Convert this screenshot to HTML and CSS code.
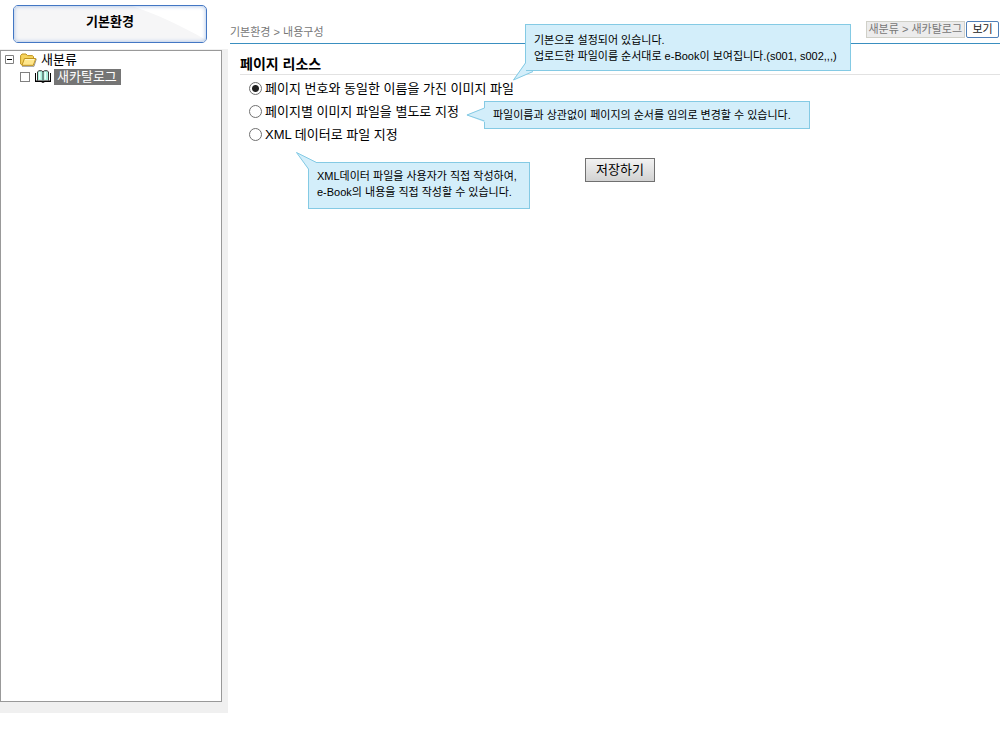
FILE: index.html
```html
<!DOCTYPE html>
<html lang="ko">
<head>
<meta charset="utf-8">
<title>기본환경 - 내용구성</title>
<link rel="stylesheet" href="styles.css">
</head>
<body>
<div class="layout">
  <aside class="sidebar">
    <div class="sidebar-head">
      <button class="env-button" type="button">
        <svg class="env-sheen" viewBox="0 0 192 36" preserveAspectRatio="none" aria-hidden="true"><path d="M0 0H118C142 8 168 20 192 34V36H0Z" fill="#f6f6f7"/></svg>
        <span class="env-label">기본환경</span>
      </button>
    </div>
    <div class="tree-frame">
      <ul class="tree">
        <li class="tree-item">
          <svg class="expander" width="9" height="9" viewBox="0 0 9 9" aria-hidden="true"><path d="M.5 .5H8.5V8.5H.5Z" fill="#fff" stroke="#808080"/><path d="M2 4.5H7" stroke="#000"/></svg>
          <svg class="folder" width="17" height="14" viewBox="0 0 17 14" aria-hidden="true">
            <path d="M2 13.3H14L16.3 6" fill="none" stroke="#999"/>
            <path d="M.6 11V2.6L2 1H6L7.5 2.6H12.5L13.5 3.7V12H2Z" fill="#f6d35c" stroke="#c09420"/>
            <path d="M2 12.3L4.4 5.5H15.8L13.3 12.3Z" fill="#ffe78c" stroke="#c09420"/>
            <path d="M5 6.6H14" stroke="#fff8cf"/>
          </svg>
          <span class="tree-label">새분류</span>
        </li>
        <li class="tree-item tree-child">
          <input class="tree-check" type="checkbox" id="catalog">
          <svg class="book" width="16" height="13" viewBox="0 0 16 13" aria-hidden="true">
            <path d="M2.5 2L4 1H6.5L8 2.2L9.5 1H12L13.5 2V10H9.5L8 11L6.5 10H2.5Z" fill="#a9f0dc"/>
            <path d="M4 2H5.5V9.5H4ZM9.5 2H11V9.5H9.5Z" fill="#effffa"/>
            <path d="M2.5 10.5V1.8L4 .7H6.5L8 1.8L9.5 .7H12L13.5 1.8V10.5M8 2V11" fill="none" stroke="#222" stroke-width=".9"/>
            <path d="M.5 3V12M15.5 3V12" stroke="#000"/>
            <path d="M0 11.3H6.5L8 12.1L9.5 11.3H16" stroke="#000" stroke-width="1.5" fill="none"/>
          </svg>
          <label class="tree-label selected" for="catalog">새카탈로그</label>
        </li>
      </ul>
    </div>
  </aside>

  <main class="main">
    <header class="topbar">
      <div class="crumb">기본환경 &gt; 내용구성</div>
      <div class="top-actions">
        <span class="path-box">새분류 &gt; 새카탈로그</span>
        <button class="view-button" type="button">보기</button>
      </div>
    </header>

    <form class="resource">
      <h1 class="section-title">페이지 리소스</h1>
      <div class="option">
        <input class="radio" type="radio" name="resource" id="r1" checked>
        <label for="r1">페이지 번호와 동일한 이름을 가진 이미지 파일</label>
        <div class="callout callout-default">기본으로 설정되어 있습니다.<br>업로드한 파일이름 순서대로 e-Book이 보여집니다.(s001, s002,,,)
          <svg class="tail" width="21" height="18" viewBox="0 0 21 18" aria-hidden="true"><path d="M12 0L0 17L20 9V8H13V0Z" fill="#d3eefa"/><path d="M12.5 0L.5 17L20 8.5" fill="none" stroke="#84cae4"/></svg>
        </div>
      </div>
      <div class="option">
        <input class="radio" type="radio" name="resource" id="r2">
        <label for="r2">페이지별 이미지 파일을 별도로 지정</label>
        <div class="callout callout-order">파일이름과 상관없이 페이지의 순서를 임의로 변경할 수 있습니다.
          <svg class="tail" width="20" height="16" viewBox="0 0 20 16" aria-hidden="true"><path d="M20 1L18 1L0 8L18 15H20Z" fill="#d3eefa"/><path d="M18.5 1L1 8L18.5 14" fill="none" stroke="#84cae4"/></svg>
        </div>
      </div>
      <div class="option">
        <input class="radio" type="radio" name="resource" id="r3">
        <label for="r3">XML 데이터로 파일 지정</label>
        <div class="callout callout-xml">XML데이터 파일을 사용자가 직접 작성하여,<br>e-Book의 내용을 직접 작성할 수 있습니다.
          <svg class="tail" width="22" height="18" viewBox="0 0 22 18" aria-hidden="true"><path d="M0 0L20 10V11H13V17H12Z" fill="#d3eefa"/><path d="M20.5 10.5L.5 .5L12.5 17" fill="none" stroke="#84cae4"/></svg>
        </div>
      </div>
      <div class="submit-row">
        <button class="save-button" type="button">저장하기</button>
      </div>
    </form>
  </main>
</div>
</body>
</html>
```
FILE: styles.css
```css
* {
  box-sizing: border-box;
}

body {
  margin: 0;
  background: #fff;
  color: #000;
  font: 13px/16px "Liberation Sans", "Noto Sans CJK KR", sans-serif;
}

button {
  font-family: inherit;
  color: inherit;
}

.layout {
  display: grid;
  grid-template-columns: 228px minmax(0, 1fr);
  height: 100vh;
}

.sidebar {
  display: flex;
  flex-direction: column;
  padding-bottom: 16px;
}

.sidebar-head {
  padding: 5px 21px 6px 13px;
}

.env-button {
  position: relative;
  display: block;
  width: 100%;
  height: 38px;
  padding: 0 0 7px;
  overflow: hidden;
  border: 1px solid #4377c4;
  border-radius: 5px;
  background: #fff;
  font-size: 13px;
  font-weight: bold;
}

.env-button::after {
  content: "";
  position: absolute;
  inset: 0;
  border-radius: 4px;
  box-shadow: inset 0 0 4px #9db9e2;
}

.env-sheen {
  position: absolute;
  inset: 0;
  width: 100%;
  height: 100%;
}

.env-label {
  position: relative;
}

.tree-frame {
  flex: 1;
  display: flex;
  padding: 1px 6px 11px 0;
  background: #f0f0f0;
}

.tree {
  flex: 1;
  margin: 0;
  padding: 0 4px;
  border: 1px solid #999;
  background: #fff;
  list-style: none;
}

.tree-item {
  display: flex;
  align-items: center;
  height: 17px;
}

.folder {
  margin: 0 4px 0 6px;
}

.tree-child {
  padding-left: 15px;
}

.tree-check {
  appearance: none;
  width: 10px;
  height: 10px;
  margin: 0 5px 0 0;
  border: 1px solid #808080;
  background: #fff;
}

.book {
  margin-right: 3px;
}

.selected {
  padding: 0 4px 0 3px;
  background: #757575;
  color: #fff;
}

.main {
  padding-left: 2px;
}

.topbar {
  display: flex;
  justify-content: space-between;
  height: 44px;
  padding-top: 20px;
  border-bottom: 1px solid #3a8fc0;
  font-size: 11px;
  color: #777;
}

.crumb {
  padding-top: 4px;
}

.top-actions {
  display: flex;
  align-items: flex-start;
  gap: 1px;
  padding: 1px 1px 0 0;
}

.path-box {
  height: 17px;
  padding: 0 2px;
  border: 1px solid #d0d0c8;
  background: #ececec;
  line-height: 14px;
}

.view-button {
  width: 33px;
  height: 17px;
  padding: 0;
  border: 1px solid #4f7fb8;
  border-radius: 2px;
  background: #fff;
  color: #222;
  font-size: 11px;
  line-height: 15px;
}

.resource {
  padding: 12px 0 0 10px;
}

.section-title {
  margin: 0 0 2px;
  padding-bottom: 2px;
  border-bottom: 1px solid #e2e2e2;
  font-size: 14px;
  line-height: 16px;
}

.option {
  position: relative;
  display: flex;
  align-items: center;
  gap: 3px;
  height: 23px;
  padding-left: 9px;
}

.radio {
  appearance: none;
  width: 13px;
  height: 13px;
  margin: 0;
  border: 1px solid #707070;
  border-radius: 50%;
  background: #fff;
}

.radio:checked {
  background: radial-gradient(circle, #222 0 3px, #fff 4px);
}

.callout {
  position: absolute;
  padding: 7px 8px 6px;
  border: 1px solid #84cae4;
  background: #d3eefa;
  font-size: 11px;
  line-height: 16px;
  white-space: nowrap;
}

.callout-default {
  top: -53px;
  left: 285px;
  width: 326px;
  height: 47px;
}

.callout-order {
  top: 1px;
  left: 244px;
  width: 326px;
  height: 28px;
  padding-top: 5px;
}

.callout-xml {
  top: 39px;
  left: 68px;
  width: 222px;
  height: 47px;
  padding-top: 5px;
}

.tail {
  position: absolute;
}

.callout-default .tail {
  top: 38px;
  left: -13px;
}

.callout-order .tail {
  top: 5px;
  left: -19px;
}

.callout-xml .tail {
  top: -11px;
  left: -13px;
}

.submit-row {
  display: flex;
  justify-content: center;
  padding-top: 12px;
}

.save-button {
  width: 70px;
  height: 24px;
  padding: 0 0 5px;
  border: 1px solid #707070;
  background: linear-gradient(#f2f2f2, #d2d2d2);
  font-size: 13px;
}
```
